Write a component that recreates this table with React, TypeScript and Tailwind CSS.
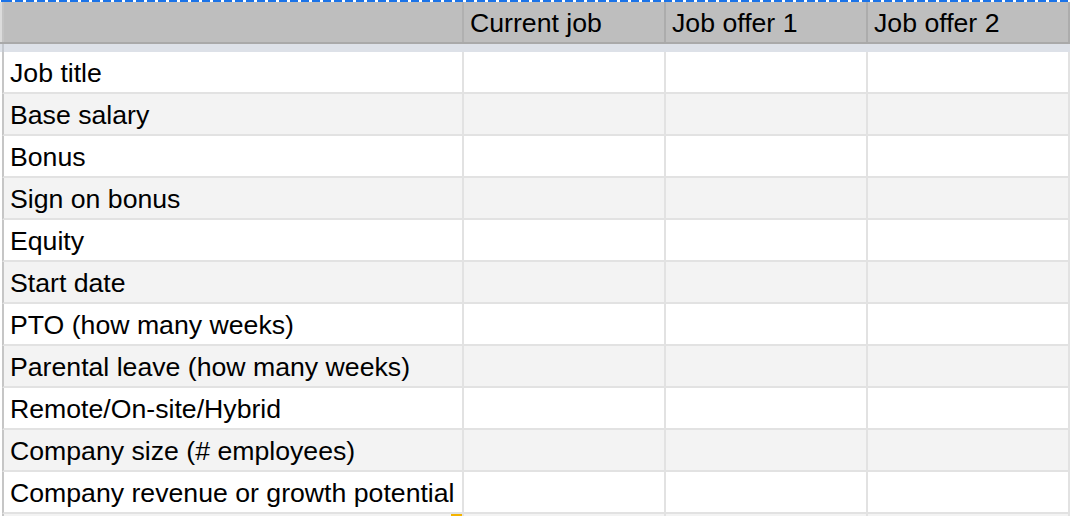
import React from "react";

const rows = [
  "Job title",
  "Base salary",
  "Bonus",
  "Sign on bonus",
  "Equity",
  "Start date",
  "PTO (how many weeks)",
  "Parental leave (how many weeks)",
  "Remote/On-site/Hybrid",
  "Company size (# employees)",
  "Company revenue or growth potential",
  "",
];

const headers = ["Current job", "Job offer 1", "Job offer 2"];

export default function App() {
  return (
    <div
      className="w-[1070px] h-[516px] overflow-hidden bg-white text-black relative"
      style={{ fontFamily: '"Liberation Sans", Arial, sans-serif' }}
    >
      {/* dashed selection line */}
      <div className="h-[2px] w-full bg-[repeating-linear-gradient(90deg,#1a73e8_0_8px,transparent_8px_11px)] bg-[position:4px_0]" />
      {/* header */}
      <div className="flex h-[40px] bg-[#bebebe] text-[26.67px] leading-[30px]">
        <div className="w-[2px] bg-[#dcdcdc]" />
        <div className="w-[462px] border-l-2 border-r-2 border-[#b0b0b0] border-l-[#c4c4c4]" />
        {headers.map((h) => (
          <div
            key={h}
            className="w-[202px] border-r-2 border-[#acacac] flex items-end pl-[6px] pb-[4px] whitespace-nowrap"
          >
            {h}
          </div>
        ))}
      </div>
      <div className="h-[2px] bg-[#a9a9a9]" />
      <div className="flex h-[8px] bg-[#dde1e8]">
        <div className="w-[2px]" />
        <div className="w-[2px] bg-[#c4c8ce]" />
      </div>
      {rows.map((r, i) => (
        <div
          key={i}
          className={`flex h-[42px] text-[26.67px] leading-[30px] ${
            i % 2 === 0 ? "bg-white" : "bg-[#f3f3f3]"
          }`}
        >
          <div className="w-[2px] bg-white" />
          <div className="relative w-[462px] border-l-2 border-r-2 border-b-2 border-l-[#c6c6c6] border-r-[#e2e2e2] border-b-[#e2e2e2] flex items-end pl-[6px] pb-[4px] whitespace-nowrap">
            {r}
            {i === 11 && (
              <div className="absolute right-0 top-0 w-[11px] h-[6px] bg-[#f4b400]" />
            )}
          </div>
          {headers.map((h) => (
            <div
              key={h}
              className="w-[202px] border-r-2 border-b-2 border-[#e2e2e2]"
            />
          ))}
        </div>
      ))}
    </div>
  );
}
